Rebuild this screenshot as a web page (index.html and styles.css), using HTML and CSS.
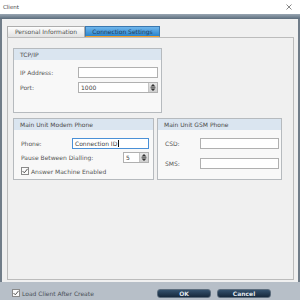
FILE: index.html
```html
<!DOCTYPE html>
<html>
<head>
<meta charset="utf-8">
<link rel="stylesheet" href="styles.css">
</head>
<body>
<div class="window">
  <div class="titlebar">
    <span class="title">Client</span>
    <svg class="close" width="6" height="6" viewBox="0 0 6 6"><path d="M0.5 0.5L5.5 5.5M5.5 0.5L0.5 5.5" stroke="#7a7a7a" stroke-width="0.9" fill="none"/></svg>
  </div>
  <div class="strip"></div>
  <div class="content">
    <div class="tabs">
      <div class="tab">Personal Information</div>
      <div class="tab active">Connection Settings</div>
    </div>
    <div class="panel">
      <div class="group tcp">
        <div class="ghead">TCP/IP</div>
        <div class="gbody">
          <div class="row"><span>IP Address:</span><div class="input w80"></div></div>
          <div class="row gap4"><span>Port:</span>
            <div class="input w80 spin"><span class="val">1000</span>
              <div class="spinner"><svg width="6" height="9" viewBox="0 0 6 9"><path d="M3 1L5.5 3.6H0.5Z M0.5 5.4H5.5L3 8Z" fill="#333"/><rect x="0.5" y="4.2" width="5" height="0.6" fill="#333"/></svg></div>
            </div>
          </div>
        </div>
      </div>
      <div class="grouprow">
        <div class="group modem">
          <div class="ghead">Main Unit Modem Phone</div>
          <div class="gbody">
            <div class="row"><span>Phone:</span><div class="input w77 focus"><span class="val">Connection ID</span><span class="caret"></span></div></div>
            <div class="row gap3"><span>Pause Between Dialling:</span>
              <div class="input w26 spin"><span class="val">5</span>
                <div class="spinner"><svg width="6" height="9" viewBox="0 0 6 9"><path d="M3 1L5.5 3.6H0.5Z M0.5 5.4H5.5L3 8Z" fill="#333"/><rect x="0.5" y="4.2" width="5" height="0.6" fill="#333"/></svg></div>
              </div>
            </div>
            <div class="check gap4"><span class="box"><svg width="8" height="8" viewBox="0 0 8 8"><path d="M1.5 4L3.3 5.8L6.6 1.8" stroke="#555" stroke-width="1" fill="none"/></svg></span><span>Answer Machine Enabled</span></div>
          </div>
        </div>
        <div class="group gsm">
          <div class="ghead">Main Unit GSM Phone</div>
          <div class="gbody">
            <div class="row"><span>CSD:</span><div class="input w79"></div></div>
            <div class="row gap9"><span>SMS:</span><div class="input w79"></div></div>
          </div>
        </div>
      </div>
    </div>
  </div>
  <div class="bar">
    <div class="check"><span class="box"><svg width="8" height="8" viewBox="0 0 8 8"><path d="M1.5 4L3.3 5.8L6.6 1.8" stroke="#555" stroke-width="1" fill="none"/></svg></span><span>Load Client After Create</span></div>
    <div class="buttons">
      <div class="btn">OK</div>
      <div class="btn">Cancel</div>
    </div>
  </div>
</div>
</body>
</html>
```
FILE: styles.css
```css
* { box-sizing: border-box; }
body {
  margin: 0;
  width: 300px;
  height: 300px;
  overflow: hidden;
  font-family: "DejaVu Sans", sans-serif;
  font-size: 6px;
  color: #555555;
  background: #f0f0f0;
}
.window {
  display: flex;
  flex-direction: column;
  height: 300px;
}
.titlebar {
  height: 14px;
  background: #ffffff;
  display: flex;
  align-items: center;
  justify-content: space-between;
  padding: 0 8px 0 3px;
}
.title { font-size: 5.5px; color: #444; }
.strip {
  height: 5px;
  background: linear-gradient(#9aa7b3, #5b6c7c);
}
.content {
  height: 263px;
  background: #f0f0f0;
  border-left: 2px solid #717d89;
  border-right: 2px solid #717d89;
  padding: 7px 4px 2px 5px;
  display: flex;
  flex-direction: column;
}
.tabs {
  display: flex;
  height: 11px;
}
.tab {
  width: 78px;
  height: 11px;
  border: 1px solid #adadad;
  border-bottom: none;
  background: linear-gradient(#fdfdfd, #e2e2e2);
  line-height: 10px;
  text-align: center;
  color: #505050;
}
.tab.active {
  width: 75px;
  background: linear-gradient(#6fb6ec, #2a84cc);
  border-color: #3a78b0;
  border-bottom: 1px solid #f0a030;
  color: #1f3d5e;
}
.panel {
  height: 243px;
  border: 1px solid #bcbcbc;
  padding: 10px 0 0 5px;
  display: flex;
  flex-direction: column;
}
.group {
  border: 1px solid #b6babe;
  background: #f8f8f8;
  display: flex;
  flex-direction: column;
}
.ghead {
  height: 11px;
  line-height: 11px;
  background: #dae5f0;
  padding-left: 6px;
  color: #4a4a4a;
}
.gbody { display: flex; flex-direction: column; }
.tcp { width: 149px; height: 65px; }
.tcp .gbody { padding: 7px 3px 0 6px; }
.grouprow {
  display: flex;
  margin-top: 5px;
}
.modem { width: 141px; height: 62px; }
.modem .gbody { padding: 8px 4px 0 7px; }
.gsm { width: 125px; height: 62px; margin-left: 3px; }
.gsm .gbody { padding: 8px 2px 0 7px; }
.row {
  display: flex;
  justify-content: space-between;
  align-items: center;
  height: 11px;
}
.gap3 { margin-top: 3px; }
.gap4 { margin-top: 4px; }
.gap9 { margin-top: 9px; }
.input {
  height: 11px;
  border: 1px solid #b0b0b0;
  background: #ffffff;
  display: flex;
  align-items: center;
  padding-left: 2px;
  color: #444;
}
.w80 { width: 80px; }
.w77 { width: 77px; }
.w79 { width: 79px; }
.w26 { width: 26px; }
.input.focus { border-color: #4a90d6; }
.caret {
  width: 1px;
  height: 7px;
  background: #111;
  margin-left: 0.5px;
}
.spin { justify-content: space-between; padding-right: 0; }
.spinner {
  width: 9px;
  height: 9px;
  background: linear-gradient(#e6e6e6, #cfcfcf);
  border-left: 1px solid #c4c4c4;
  display: flex;
  align-items: center;
  justify-content: center;
}
.check {
  display: flex;
  align-items: center;
  height: 8px;
}
.box {
  width: 8px;
  height: 8px;
  border: 1px solid #8a8a8a;
  background: #fafafa;
  margin-right: 2px;
  display: flex;
  align-items: center;
  justify-content: center;
}
.box svg { flex: none; }
.bar {
  height: 18px;
  background: #b7bfc8;
  display: flex;
  align-items: flex-start;
  padding: 7px 29px 0 12px;
}
.bar .check { color: #4a5058; }
.buttons {
  display: flex;
  margin-left: auto;
  gap: 6px;
}
.btn {
  width: 54px;
  height: 9px;
  border-radius: 3px;
  border: 1px solid #5c6c7c;
  background: linear-gradient(#34516d, #17293c);
  color: #e0e7ee;
  font-weight: bold;
  text-align: center;
  line-height: 7px;
}
```
